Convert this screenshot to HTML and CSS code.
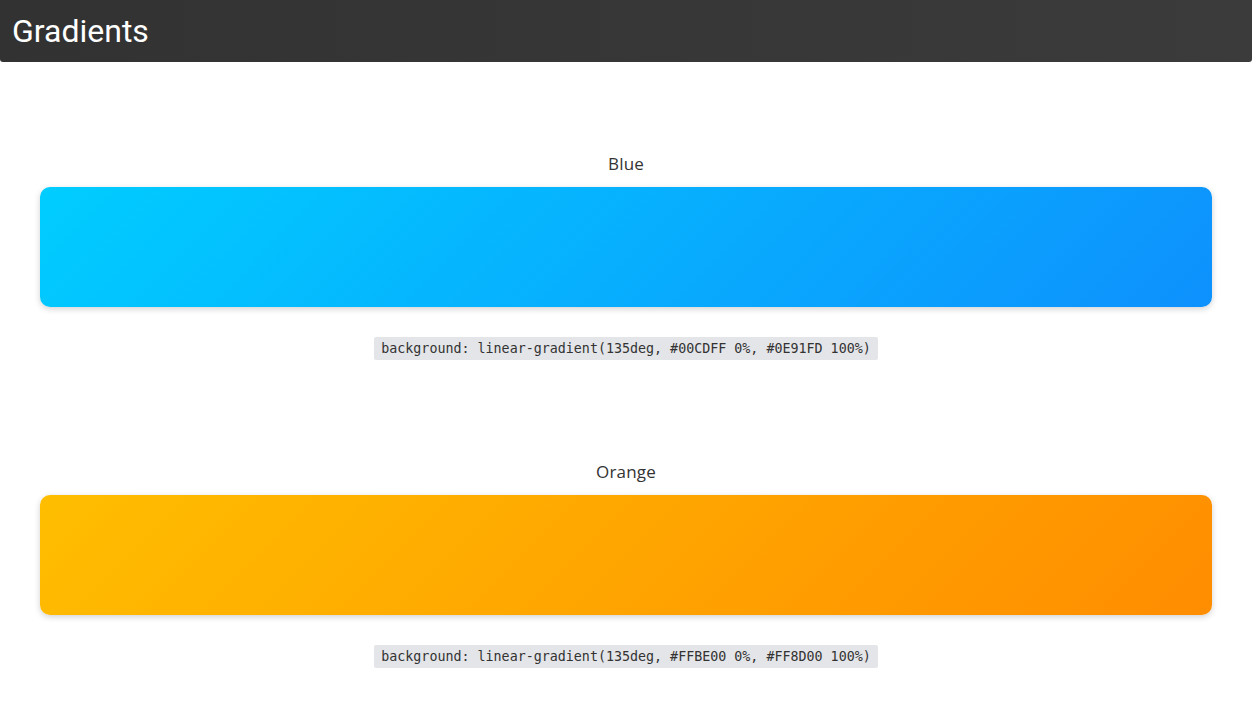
FILE: index.html
```html
<!DOCTYPE html>
<html>
<head>
<meta charset="utf-8">
<link rel="stylesheet" href="styles.css">
</head>
<body>
<header class="topbar"><h1 class="title">Gradients</h1></header>
<main class="list">
  <section class="item">
    <div class="label">Blue</div>
    <div class="swatch swatch-blue"></div>
    <code class="code">background: linear-gradient(135deg, #00CDFF 0%, #0E91FD 100%)</code>
  </section>
  <section class="item">
    <div class="label">Orange</div>
    <div class="swatch swatch-orange"></div>
    <code class="code">background: linear-gradient(135deg, #FFBE00 0%, #FF8D00 100%)</code>
  </section>
</main>
</body>
</html>
```
FILE: styles.css
```css
html, body { margin: 0; padding: 0; background: #fff; }
body { font-family: "Lato", "Open Sans", sans-serif; }
.topbar {
  height: 62px;
  background: linear-gradient(90deg, #323232, #3b3b3b);
  border-radius: 0 0 3px 3px;
  display: flex;
  align-items: center;
  padding: 0 12px;
}
.title {
  margin: 0;
  font-family: Roboto, sans-serif;
  font-weight: 400;
  font-size: 32px;
  color: #fff;
}
.list {
  display: flex;
  flex-direction: column;
  gap: 100px;
  padding: 90px 40px 40px;
}
.item {
  display: flex;
  flex-direction: column;
  align-items: center;
}
.label {
  font-family: "Open Sans", sans-serif;
  font-size: 17px;
  line-height: 24px;
  color: #333;
  margin-bottom: 11px;
  letter-spacing: 0.2px;
}
.swatch {
  align-self: stretch;
  height: 120px;
  border-radius: 10px;
  box-shadow: 0 2px 6px rgba(0,0,0,0.18);
  margin-bottom: 30px;
}
.swatch-blue { background: linear-gradient(135deg, #00CDFF 0%, #0E91FD 100%); }
.swatch-orange { background: linear-gradient(135deg, #FFBE00 0%, #FF8D00 100%); }
.code {
  font-family: "DejaVu Sans Mono", monospace;
  font-size: 13.33px;
  line-height: 23px;
  background: #e4e5e8;
  color: #333;
  padding: 0 7px;
  border-radius: 2px;
}
```
